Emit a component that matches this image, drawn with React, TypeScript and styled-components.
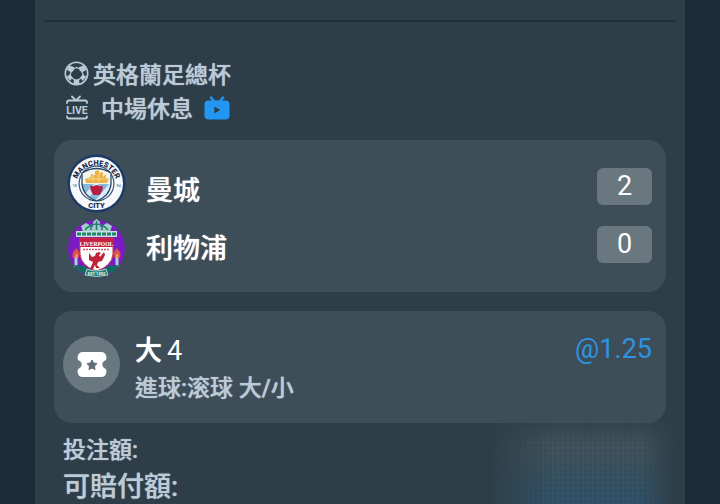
import React from "react";
import styled, { createGlobalStyle } from "styled-components";

const GlobalStyle = createGlobalStyle`
  * { box-sizing: border-box; }
  body {
    margin: 0;
    background: #1c2b38;
    color: #ffffff;
    font-family: Roboto, "Noto Sans CJK TC", sans-serif;
    font-weight: 500;
  }
  h1, h2, p, ul, dl, dd { margin: 0; padding: 0; font: inherit; }
  ul { list-style: none; }
`;

const Page = styled.main`
  min-height: 100vh;
  padding: 0 35px;
  display: flex;
`;

const Slip = styled.article`
  position: relative;
  flex: 1;
  min-width: 0;
  padding: 20px 9px 0;
  background: #2e3e48;
  overflow: hidden;
`;

const Divider = styled.hr`
  height: 2px;
  margin: 0;
  border: 0;
  background: #1f2e38;
`;

const Body = styled.div`
  display: flex;
  flex-direction: column;
  padding: 37px 10px 0;
`;

const Line = styled.div<{ $gap: number }>`
  display: flex;
  align-items: center;
  gap: ${(p) => p.$gap}px;
  height: 34px;
  padding-left: 10px;
  color: #bccbd8;
  font-size: 23px;
  line-height: 34px;
  text-shadow: 0 0 1px currentColor;

  svg {
    margin-bottom: 5px;
    text-shadow: none;
  }
`;

const IconButton = styled.button`
  display: flex;
  padding: 0;
  border: 0;
  background: none;
  cursor: pointer;
`;

const Card = styled.section<{ $top: number }>`
  display: flex;
  margin-top: ${(p) => p.$top}px;
  border-radius: 18px;
  background: #3e4e58;
`;

const MatchCard = styled(Card)`
  padding: 14px 14px 14px 13px;
`;

const Crests = styled.div`
  display: flex;
  flex-direction: column;
  gap: 6px;
  margin-right: 20px;

  svg {
    display: block;
  }
`;

const Names = styled.ul`
  flex: 1;
  padding-top: 8px;
  font-size: 27px;
  line-height: 58px;
  text-shadow: 0 0 1px currentColor;
`;

const Scores = styled.ul`
  display: flex;
  flex-direction: column;
  gap: 21px;
  padding-top: 14px;
`;

const Score = styled.li`
  width: 55px;
  height: 37px;
  border-radius: 6px;
  background: #69777f;
  font-size: 27px;
  font-weight: 400;
  line-height: 37px;
  text-align: center;
`;

const BetCard = styled(Card)`
  padding: 20px 14px 15px 9px;
`;

const TicketBadge = styled.div`
  display: flex;
  align-items: center;
  justify-content: center;
  width: 57px;
  height: 57px;
  margin: 5px 15px 0 0;
  border-radius: 50%;
  background: #69777f;
`;

const BetText = styled.div`
  flex: 1;
  padding-top: 1px;
  text-shadow: 0 0 1px currentColor;
`;

const Pick = styled.h2`
  font-size: 27px;
  line-height: 38px;
`;

const PickValue = styled.span`
  margin-left: 5px;
  font-weight: 400;
  text-shadow: none;
`;

const Market = styled.p`
  color: #bccbd8;
  font-size: 23px;
  line-height: 38px;
`;

const Odds = styled.p`
  color: #2d94e2;
  font-size: 27px;
  font-weight: 400;
  line-height: 36px;
`;

const Amounts = styled.dl`
  padding: 10px 9px 0;
  color: #bccbd8;
  text-shadow: 0 0 1px currentColor;
`;

const AmountLabel = styled.dt<{ $size: number }>`
  font-size: ${(p) => p.$size}px;
  line-height: 36px;
`;

const Smudge = styled.div`
  position: absolute;
  right: 8px;
  bottom: -24px;
  width: 190px;
  height: 122px;
  background:
    repeating-linear-gradient(90deg, rgba(130, 160, 180, 0.04) 0 2px, transparent 2px 5px),
    repeating-linear-gradient(0deg, rgba(130, 160, 180, 0.03) 0 2px, transparent 2px 5px),
    linear-gradient(180deg, #3e4e58 35%, #344e5d 55%, #2d4e65 80%);
  mask-image:
    linear-gradient(90deg, transparent, #000 35%, #000 80%, transparent),
    linear-gradient(180deg, transparent 5%, #000 30%);
  mask-composite: intersect;
  pointer-events: none;
`;

const FootballIcon = () => (
  <svg width="25" height="25" viewBox="0 0 25 25" fill="none" stroke="#bccbd8" strokeWidth="1.6" aria-hidden="true">
    <circle cx="12.5" cy="12.5" r="11.2" />
    <path d="m8.500 8.500 4-2 4.500 2 2.500 6-5 4.500h-4l-5-4.500z" strokeWidth="1.2" />
    <path d="m5 4.500 5 1.500-.5 4-3 1-3.500-2zM20 4.500 15 6l.8 4 3 1 3.500-2zM2.500 15.500l4-2 1.800 3-2 3.500zM22.500 15.500l-4-2-2 3 2 3.500zM10 18.500h5l.5 4.500h-6z" fill="#bccbd8" stroke="none" />
  </svg>
);

const LiveIcon = () => (
  <svg width="26" height="26" viewBox="0 0 26 26" fill="none" stroke="#bccbd8" strokeWidth="1.8" strokeLinecap="round" aria-label="LIVE">
    <path d="m8 1.500 4 4 4-4M3 8V7.500Q3 5.500 5 5.500h16q2 0 2 2V8M3 21.500q0 2 2 2h16q2 0 2-2" />
    <text x="13" y="18.500" textAnchor="middle" fontFamily="Roboto, sans-serif" fontSize="10.5" fontWeight="700" fill="#bccbd8" stroke="none">LIVE</text>
  </svg>
);

const TvIcon = () => (
  <svg width="26" height="24" viewBox="0 0 26 24" aria-hidden="true">
    <path d="m7 1.500 3.200 4M19 1.500l-3.200 4" stroke="#2196f3" strokeWidth="2.4" strokeLinecap="round" />
    <rect x="0.5" y="4.5" width="25" height="19" rx="4" fill="#2196f3" />
    <path d="M10.300 10.500v7l6-3.500z" fill="#2e3e48" />
  </svg>
);

const CityCrest = () => (
  <svg width="59" height="59" viewBox="0 0 59 59" role="img" aria-label="曼城">
    <defs>
      <path id="city-top" d="M9 32A20.5 20.5 0 1 1 50 32" />
      <clipPath id="city-shield"><path d="M15 19Q29.500 10 44 19V30Q43 42 29.500 47Q16 42 15 30z" /></clipPath>
    </defs>
    <circle cx="29.5" cy="29.5" r="29" fill="#1d3a66" />
    <circle cx="29.5" cy="29.5" r="26.5" fill="#f7fafc" />
    <circle cx="29.5" cy="29.5" r="18" fill="#35557f" />
    <circle cx="29.5" cy="29.5" r="16.8" fill="#fff" />
    <g clipPath="url(#city-shield)">
      <path d="M13 11h33v37H13z" fill="#f4f4e9" />
      <path d="M13 30h33v18H13z" fill="#82b9e1" />
      <path d="m15 43 12-13h5L19 48zm12 5 15-18h5L33 48z" fill="#d9ecf7" />
      <path d="M19 29h21l2-5-3 1v-5l-3 3v-5l-4 1v-3l-4 1v4l-4-1v3l-6 2z" fill="#edb34b" />
      <path d="M21 25h17M26 20v8m6-9v9" stroke="#f8d68b" strokeWidth="1" />
    </g>
    <path d="M15 19Q29.500 10 44 19V30Q43 42 29.500 47Q16 42 15 30z" fill="none" stroke="#294568" strokeWidth="1.3" />
    <path d="m29.500 31 3.500 1.300 2.500-.8.300 3-1 3-2.300 3.500h-6l-2.300-3.500-1-3 .3-3 2.500.8z" fill="#b61f40" />
    <g fontFamily="Roboto, sans-serif" fontWeight="900" fill="#1c2c4d">
      <text fontSize="7.500" textAnchor="middle"><textPath href="#city-top" startOffset="50%">MANCHESTER</textPath></text>
      <text x="29.5" y="54" fontSize="7.500" textAnchor="middle">CITY</text>
      <text x="7.500" y="33" fontSize="4" textAnchor="middle" fill="#7c99b7">18</text>
      <text x="51.500" y="33" fontSize="4" textAnchor="middle" fill="#7c99b7">94</text>
    </g>
  </svg>
);

const LiverpoolCrest = () => (
  <svg width="59" height="59" viewBox="0 0 59 59" role="img" aria-label="利物浦">
    <circle cx="29.5" cy="29.5" r="28.5" fill="#7a1bc4" />
    <path d="M26 8V3l3.500-3L33 3v5l7-4 5 3-2 6H16l-2-6 5-3z" fill="#9fcfc6" />
    <path d="M18 11q5-6 11.500-6T41 11M24 11V6m11 5V6M29.500 11V2" fill="none" stroke="#25806f" strokeWidth="1.6" />
    <path d="M9 12h41v6H9z" fill="#c5e3dc" />
    <path d="M10 15h39" stroke="#218470" strokeWidth="3" strokeDasharray="4 1" />
    <path d="M13 19h33v16q-1 12-16.500 17Q14 47 13 35z" fill="#fff" stroke="#c83a55" strokeWidth="1" />
    <path d="M13 19h33v9H13z" fill="#c92043" />
    <text x="29.5" y="26.500" fontFamily="Liberation Serif, serif" fontSize="5.600" fontWeight="700" textAnchor="middle" fill="#fff">LIVERPOOL</text>
    <path d="M16 30.500h27" stroke="#cb526b" strokeWidth="1.500" strokeDasharray="2 1" />
    <path d="m22 34 3 4 3-1 1-3 3-1 2 1-2 2 1 2 4-5 1 3-3 6-4 1-1 3 3 3h-4l-1-3-2 4h-3l3-7-4-2z" fill="#bf2238" />
    <path d="M9 48V38m41 10V38" stroke="#a9d4cb" strokeWidth="3" />
    <path d="M9 29q6 5 2 10H6q-2-4 3-10zm41 0q5 5 3 10h-5q-4-4 2-10z" fill="#df4d4c" />
    <path d="M9 34q3 3 1 5H8zm41 0q3 3 0 5h-2z" fill="#f2a06a" />
    <path d="m7 46 11 1 5 4h13l5-4 11-1-5 7-11 2-4 3H27l-4-3-11-2z" fill="#12695f" />
    <path d="M20 50q9 4 19 0l2 6q-11 3-23 0z" fill="#247e70" stroke="#a5d5cb" strokeWidth="1" />
    <text x="29.5" y="56" fontFamily="Roboto, sans-serif" fontSize="4" fontWeight="700" textAnchor="middle" fill="#e5f5ee">EST·1892</text>
  </svg>
);

const TicketIcon = () => (
  <svg width="30" height="25" viewBox="0 0 30 25" aria-hidden="true">
    <path d="M6 0h18q5 0 5.500 5.500Q29.500 8 28 8.500a4.300 4.300 0 0 0 0 8q1.500.5 1.500 3Q29 25 24 25H6q-5 0-5.500-5.500Q.5 17 2 16.500a4.300 4.300 0 0 0 0-8Q.5 8 .5 5.500 1 0 6 0z" fill="#fff" />
    <path d="m15 8 1.500 3 3.500.6-2.500 2.500.5 3.500-3-1.600-3 1.600.5-3.500-2.500-2.500 3.500-.6z" fill="#5f6d76" stroke="#5f6d76" strokeLinejoin="round" />
  </svg>
);

export default function App() {
  return (
    <>
      <GlobalStyle />
      <Page lang="zh-Hant">
        <Slip>
          <Divider />
          <Body>
            <Line as="h1" $gap={4}>
              <FootballIcon />
              英格蘭足總杯
            </Line>
            <Line $gap={11}>
              <LiveIcon />
              中場休息
              <IconButton type="button" aria-label="觀看直播">
                <TvIcon />
              </IconButton>
            </Line>
            <MatchCard $top={13}>
              <Crests>
                <CityCrest />
                <LiverpoolCrest />
              </Crests>
              <Names>
                <li>曼城</li>
                <li>利物浦</li>
              </Names>
              <Scores>
                <Score>2</Score>
                <Score>0</Score>
              </Scores>
            </MatchCard>
            <BetCard $top={19}>
              <TicketBadge>
                <TicketIcon />
              </TicketBadge>
              <BetText>
                <Pick>
                  大<PickValue>4</PickValue>
                </Pick>
                <Market>進球:滚球 大/小</Market>
              </BetText>
              <Odds>@1.25</Odds>
            </BetCard>
            <Amounts>
              <AmountLabel $size={23}>投注額:</AmountLabel>
              <AmountLabel $size={27}>可賠付額:</AmountLabel>
            </Amounts>
          </Body>
          <Smudge />
        </Slip>
      </Page>
    </>
  );
}
